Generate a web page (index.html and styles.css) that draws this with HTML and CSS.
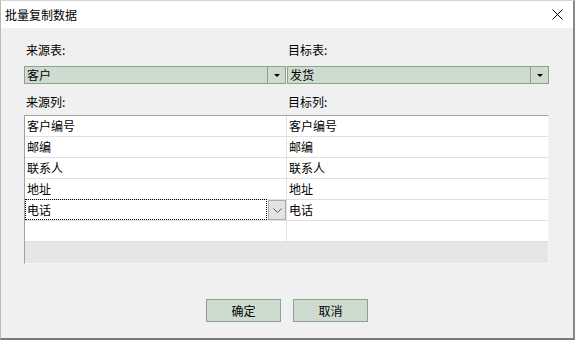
FILE: index.html
```html
<!DOCTYPE html>
<html lang="zh-CN">
<head>
    <meta charset="UTF-8">
    <meta name="viewport" content="width=device-width, initial-scale=1.0">
    <title>批量复制数据</title>
    <link rel="stylesheet" href="styles.css">
</head>
<body>
    <div class="dialog">
        <div class="titlebar">
            <span class="title">批量复制数据</span>
            <svg class="close" width="11" height="11" viewBox="0 0 11 11">
                <path d="M0.5 0.5 L10.5 10.5 M10.5 0.5 L0.5 10.5" stroke="#000" stroke-width="1" fill="none"/>
            </svg>
        </div>
        <div class="content">
            <div class="pair">
                <div class="label">来源表:</div>
                <div class="label right">目标表:</div>
                <div class="combo">
                    <span class="combo-text">客户</span>
                    <span class="combo-btn"><span class="tri"></span></span>
                </div>
                <div class="combo">
                    <span class="combo-text">发货</span>
                    <span class="combo-btn"><span class="tri"></span></span>
                </div>
                <div class="label label-cols">来源列:</div>
                <div class="label label-cols right">目标列:</div>
            </div>

            <div class="grid">
                <div class="row">
                    <div class="cell">客户编号</div>
                    <div class="cell">客户编号</div>
                </div>
                <div class="row">
                    <div class="cell">邮编</div>
                    <div class="cell">邮编</div>
                </div>
                <div class="row">
                    <div class="cell">联系人</div>
                    <div class="cell">联系人</div>
                </div>
                <div class="row">
                    <div class="cell">地址</div>
                    <div class="cell">地址</div>
                </div>
                <div class="row">
                    <div class="cell editing">
                        <span class="edit-text">电话</span>
                        <span class="edit-btn">
                            <svg width="9" height="5" viewBox="0 0 9 5">
                                <path d="M0.5 0.5 L4.5 4.5 L8.5 0.5" stroke="#555" stroke-width="1" fill="none"/>
                            </svg>
                        </span>
                    </div>
                    <div class="cell">电话</div>
                </div>
                <div class="row">
                    <div class="cell"></div>
                    <div class="cell"></div>
                </div>
                <div class="filler"></div>
            </div>

            <div class="buttons">
                <button class="btn">确定</button>
                <button class="btn">取消</button>
            </div>
        </div>
    </div>
</body>
</html>
```

FILE: styles.css
```css
body {
    margin: 0;
    font-family: "Noto Sans CJK SC", "Liberation Sans", sans-serif;
    font-size: 12px;
    color: #000;
    background-color: #fff;
}

.dialog {
    width: 575px;
    height: 340px;
    box-sizing: border-box;
    border-top: 1px solid #d4d4d4;
    border-left: 1px solid #b8b8b8;
    border-right: 2px solid #888;
    border-bottom: 2px solid #7a7a7a;
    display: flex;
    flex-direction: column;
    background-color: #f0f0f0;
}

.titlebar {
    height: 27px;
    background-color: #fff;
    display: flex;
    align-items: center;
    justify-content: space-between;
    padding: 0 10px 0 4px;
}

.title {
    line-height: 16px;
}

.close {
    display: block;
    margin-top: 0;
}

.content {
    flex: 1;
    padding: 14px 24px 0 23px;
    display: flex;
    flex-direction: column;
}

.pair {
    display: grid;
    grid-template-columns: 262px 263px;
}

.label {
    height: 16px;
    line-height: 16px;
    padding-left: 2px;
    margin-bottom: 8px;
}

.label.right {
    padding-left: 2px;
}

.label-cols {
    margin-top: 10px;
    margin-bottom: 5px;
}

.combo {
    height: 18px;
    box-sizing: border-box;
    border: 1px solid #8fa08f;
    background-color: #cedccf;
    display: flex;
    align-items: center;
}

.combo + .combo {
    margin-left: 1px;
}

.combo:first-of-type {
    width: 262px;
}

.combo-text {
    flex: 1;
    padding-left: 2px;
    line-height: 16px;
}

.combo-btn {
    width: 17px;
    height: 16px;
    border-left: 1px solid #8fa08f;
    display: flex;
    align-items: center;
    justify-content: center;
}

.tri {
    width: 0;
    height: 0;
    border-left: 3px solid transparent;
    border-right: 3px solid transparent;
    border-top: 3px solid #000;
}

.grid {
    width: 525px;
    height: 149px;
    box-sizing: border-box;
    border-top: 1px solid #a0a0a0;
    border-left: 1px solid #a0a0a0;
    border-right: 1px solid #f4f4f4;
    border-bottom: 1px solid #f4f4f4;
    display: flex;
    flex-direction: column;
    background-color: #fff;
}

.row {
    display: grid;
    grid-template-columns: 261px 262px;
    height: 21px;
    box-sizing: border-box;
    border-bottom: 1px solid #e0e0e0;
}

.cell {
    padding-left: 2px;
    line-height: 20px;
    box-sizing: border-box;
}

.cell + .cell {
    border-left: 1px solid #e0e0e0;
}

.editing {
    display: flex;
    padding-left: 0;
    height: 21px;
    margin-top: -1px;
}

.edit-text {
    flex: 1;
    border: 1px dotted #000;
    padding-left: 1px;
    line-height: 19px;
}

.edit-btn {
    width: 16px;
    height: 18px;
    margin: 1px 0 0 1px;
    background-color: #e3e3e3;
    border: 1px solid #acacac;
    display: flex;
    align-items: center;
    justify-content: center;
}

.filler {
    flex: 1;
    background-color: #e5e6e7;
}

.buttons {
    display: flex;
    justify-content: center;
    gap: 12px;
    margin-top: 35px;
    padding-left: 1px;
}

.btn {
    width: 75px;
    height: 23px;
    font-family: inherit;
    font-size: 12px;
    color: #000;
    background-color: #cedccf;
    border: 1px solid #8fa08f;
    padding: 0;
    border-radius: 0;
}
```
